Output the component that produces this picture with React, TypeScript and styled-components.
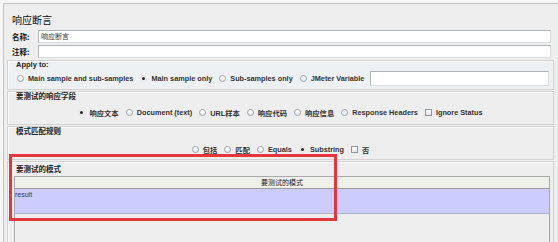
import React from 'react';
import styled, { createGlobalStyle, css } from 'styled-components';

const Global = createGlobalStyle`
  html, body {
    margin: 0;
    padding: 0;
    background: #f6f6f6;
    overflow: hidden;
  }
  body {
    font-family: "Liberation Sans", "Noto Sans CJK SC", sans-serif;
    color: #222;
  }
`;

const Page = styled.div`
  position: relative;
  width: 558px;
  height: 242px;
  padding-top: 3px;
  box-sizing: border-box;
`;

const Frame = styled.div`
  margin-left: 3px;
  height: 239px;
  box-sizing: border-box;
  border-top: 1px solid #c4c4c4;
  border-left: 1px solid #c4c4c4;
  background: #eeeeee;
  padding: 8px 4px 0 3px;
  display: flex;
  flex-direction: column;
`;

const Title = styled.div`
  margin-left: 5px;
  height: 16px;
  line-height: 16px;
  font-family: "Noto Sans CJK SC", sans-serif;
  font-size: 10px;
  color: #111;
`;

const FieldRow = styled.div`
  display: flex;
  align-items: center;
  margin: 2px 3px 0 5px;
  height: 13px;
`;

const FieldLabel = styled.span`
  width: 26px;
  font-family: "Noto Sans CJK SC", sans-serif;
  font-size: 7.5px;
  font-weight: 700;
  color: #111;
`;

const TextBox = styled.div<{ $wide?: boolean }>`
  flex: 1;
  height: ${(p) => (p.$wide ? '15px' : '100%')};
  margin-left: ${(p) => (p.$wide ? '-1px' : '0')};
  box-sizing: border-box;
  background: #ffffff;
  border: 1px solid #aeb4ba;
  border-right-color: #d8dde2;
  border-bottom-color: #d8dde2;
  font-family: "Noto Sans CJK SC", sans-serif;
  font-size: 7px;
  line-height: 11px;
  padding-left: 2px;
  color: #333;
`;

const Panel = styled.div<{ $tint?: boolean; $h?: number; $gap?: number }>`
  margin-top: ${(p) => p.$gap ?? 1}px;
  border: 1px solid #d2d2d2;
  box-shadow: inset 1px 1px 0 #fafafa;
  background: ${(p) => (p.$tint ? '#eef1f4' : '#eeeeee')};
  display: flex;
  flex-direction: column;
  box-sizing: border-box;
  ${(p) =>
    p.$h
      ? css`
          height: ${p.$h}px;
        `
      : css`
          flex: 1;
          border-bottom: none;
        `}
`;

const PanelTitle = styled.div<{ $latin?: boolean; $top?: number }>`
  margin: ${(p) => p.$top ?? -1}px 0 0 8px;
  height: 9px;
  line-height: 9px;
  font-size: 7.5px;
  font-weight: 700;
  color: #222;
  font-family: ${(p) =>
    p.$latin ? '"Liberation Sans", sans-serif' : '"Noto Sans CJK SC", sans-serif'};
`;

const OptionRow = styled.div<{ $center?: boolean; $shift?: number }>`
  flex: 1;
  display: flex;
  align-items: center;
  justify-content: ${(p) => (p.$center ? 'center' : 'flex-start')};
  gap: 7px;
  margin-top: ${(p) => p.$shift ?? 0}px;
  padding: 0 4px 0 ${(p) => (p.$center ? 4 : 9)}px;
`;

const Option = styled.label`
  display: flex;
  align-items: center;
  gap: 4px;
  font-size: 7.3px;
  font-weight: 700;
  color: #333;
  white-space: nowrap;
  font-family: "Liberation Sans", "Noto Sans CJK SC", sans-serif;
`;

const Radio = styled.span<{ $on?: boolean }>`
  width: 7px;
  height: 7px;
  box-sizing: border-box;
  border-radius: 50%;
  border: 1px solid #9aa4ae;
  background: linear-gradient(#ffffff, #e6eaee);
  display: grid;
  place-items: center;
  ${(p) =>
    p.$on &&
    css`
      border-color: #e0e0e0;
      background: #f4f4f4;
      &::after {
        content: '';
        width: 3px;
        height: 3px;
        border-radius: 50%;
        background: #222;
      }
    `}
`;

const Check = styled.span`
  width: 7px;
  height: 7px;
  box-sizing: border-box;
  border: 1px solid #8d959e;
  background: linear-gradient(#ffffff, #e2e6ea);
`;

const TablePane = styled.div`
  flex: 1;
  margin: 3px 3px 0 6px;
  border: 1px solid #a9a9a9;
  border-bottom: none;
  display: flex;
  flex-direction: column;
`;

const TableHead = styled.div`
  height: 11px;
  line-height: 11px;
  text-align: center;
  background: #eef0ea;
  border-bottom: 1px solid #9c9c9c;
  font-family: "Noto Sans CJK SC", sans-serif;
  font-size: 7px;
  color: #222;
`;

const TableRow = styled.div<{ $selected?: boolean }>`
  height: 25px;
  background: ${(p) => (p.$selected ? '#ccccff' : 'transparent')};
  border-bottom: 1px solid #a9b4c8;
  font-size: 7px;
  color: #333366;
  padding: 2px 0 0 0;
  box-sizing: border-box;
`;

const Highlight = styled.div`
  position: absolute;
  left: 9px;
  top: 154px;
  width: 328px;
  height: 67px;
  box-sizing: border-box;
  border: 3px solid #e8343c;
  pointer-events: none;
`;

const fieldOptions = ['响应文本', 'Document (text)', 'URL样本', '响应代码', '响应信息', 'Response Headers'];
const ruleOptions = ['包括', '匹配', 'Equals', 'Substring'];

export default function App() {
  return (
    <Page>
      <Global />
      <Frame>
        <Title>响应断言</Title>
        <FieldRow>
          <FieldLabel>名称:</FieldLabel>
          <TextBox>响应断言</TextBox>
        </FieldRow>
        <FieldRow>
          <FieldLabel>注释:</FieldLabel>
          <TextBox />
        </FieldRow>

        <Panel $tint $h={30} $gap={2}>
          <PanelTitle $latin>Apply to:</PanelTitle>
          <OptionRow $shift={-2}>
            <Option><Radio />Main sample and sub-samples</Option>
            <Option><Radio $on />Main sample only</Option>
            <Option><Radio />Sub-samples only</Option>
            <Option><Radio />JMeter Variable</Option>
            <TextBox $wide />
          </OptionRow>
        </Panel>

        <Panel $h={34}>
          <PanelTitle>要测试的响应字段</PanelTitle>
          <OptionRow $center $shift={1}>
            {fieldOptions.map((o, i) => (
              <Option key={o}><Radio $on={i === 0} />{o}</Option>
            ))}
            <Option><Check />Ignore Status</Option>
          </OptionRow>
        </Panel>

        <Panel $h={34}>
          <PanelTitle>模式匹配规则</PanelTitle>
          <OptionRow $center $shift={5}>
            {ruleOptions.map((o) => (
              <Option key={o}><Radio $on={o === 'Substring'} />{o}</Option>
            ))}
            <Option><Check />否</Option>
          </OptionRow>
        </Panel>

        <Panel>
          <PanelTitle $top={2}>要测试的模式</PanelTitle>
          <TablePane>
            <TableHead>要测试的模式</TableHead>
            <TableRow $selected>result</TableRow>
          </TablePane>
        </Panel>
      </Frame>
      <Highlight />
    </Page>
  );
}
